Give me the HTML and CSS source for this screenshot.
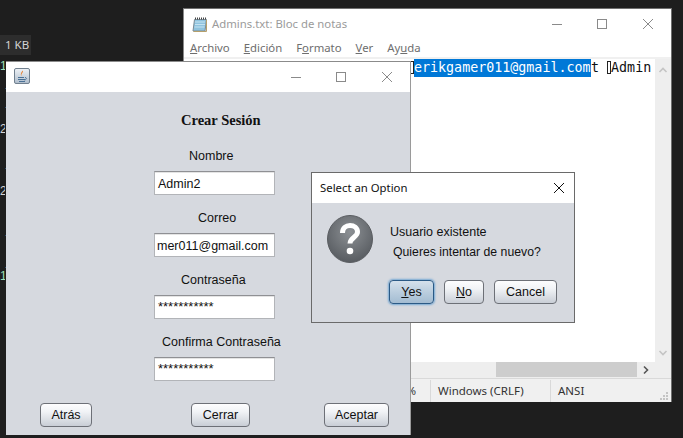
FILE: index.html
```html
<!DOCTYPE html>
<html lang="es">
<head>
<meta charset="utf-8">
<title>Crear Sesión</title>
<link rel="stylesheet" href="styles.css">
</head>
<body>
<div class="desktop">
  <div class="explorer-size">1 KB</div>
  <div class="gutter g1">1</div>
  <div class="gutter g2">2</div>
  <div class="gutter g3">2</div>
  <div class="gutter g4">1</div>
  <div class="ticks"></div>

  <section class="window notepad">
    <header class="np-title">
      <svg class="np-icon" width="16" height="16" viewBox="0 0 16 16">
        <path d="M2.5 3.5h12l-1.5 11.5h-12z" fill="#8fc3de" stroke="#7b8a94"/>
        <path d="M3 6h10M3 8.5h10M2.5 11h10" stroke="#c4e2f0" stroke-width="1"/>
        <path d="M3 2.5h11" stroke="#444" stroke-width="2" stroke-dasharray="1 1"/>
        <path d="M14.5 4v11.5h-13" fill="none" stroke="#b59f6b"/>
      </svg>
      <span class="np-name">Admins.txt: Bloc de notas</span>
      <div class="controls np-controls">
        <svg width="10" height="10" viewBox="0 0 10 10"><path d="M0 5.500h10" stroke="#8a8a8a"/></svg>
        <svg width="10" height="10" viewBox="0 0 10 10"><rect x=".5" y=".5" width="9" height="9" fill="none" stroke="#8a8a8a"/></svg>
        <svg width="10" height="10" viewBox="0 0 10 10"><path d="M0 0l10 10M10 0L0 10" stroke="#8a8a8a"/></svg>
      </div>
    </header>
    <nav class="np-menu">
      <span><u>A</u>rchivo</span>
      <span><u>E</u>dición</span>
      <span>F<u>o</u>rmato</span>
      <span><u>V</u>er</span>
      <span>Ay<u>u</u>da</span>
    </nav>
    <div class="np-body">
      <div class="np-edit">
        <div class="np-line"><span class="box"></span><span class="sel">erikgamer011@gmail.com</span>t <span class="box"></span>Admin</div>
      </div>
      <div class="vscroll">
        <svg width="10" height="6" viewBox="0 0 10 6"><path d="M1.5 5L5 1.5 8.5 5" fill="none" stroke="#c4c4c4" stroke-width="1.6"/></svg>
        <svg width="10" height="6" viewBox="0 0 10 6"><path d="M1.5 1L5 4.5 8.5 1" fill="none" stroke="#c4c4c4" stroke-width="1.6"/></svg>
      </div>
    </div>
    <div class="hscroll">
      <div class="hthumb"></div>
      <svg class="harrow" width="6" height="10" viewBox="0 0 6 10"><path d="M1 1.5L4.5 5 1 8.5" fill="none" stroke="#555" stroke-width="1.6"/></svg>
    </div>
    <footer class="np-status">
      <span class="st-zoom">%</span>
      <span class="st-eol">Windows (CRLF)</span>
      <span class="st-enc">ANSI</span>
      <svg class="grip" width="10" height="10" viewBox="0 0 10 10"><path d="M7 1h2v2H7zM4 4h2v2H4zM7 4h2v2H7zM1 7h2v2H1zM4 7h2v2H4zM7 7h2v2H7z" fill="#c4c4c4"/></svg>
    </footer>
  </section>

  <section class="window java">
    <header class="j-title">
      <svg class="j-icon" width="16" height="16" viewBox="0 0 16 16">
        <defs><linearGradient id="jg" x1="0" y1="0" x2="0" y2="1"><stop offset="0" stop-color="#eef2f6"/><stop offset="1" stop-color="#aebccb"/></linearGradient></defs>
        <rect x=".5" y=".5" width="15" height="15" rx="1.5" fill="url(#jg)" stroke="#71808f"/>
        <path d="M8.500 2.500C10 4.500 6.500 5.500 7.500 8 6 6.500 7.500 4.500 8.500 2.500z" fill="#e8751a"/>
        <path d="M4 9.500h6M4 11.500h7M5 13.500h6" stroke="#4a7196"/>
        <path d="M11 9.500c2 0 2 2-.5 2.500" fill="none" stroke="#4a7196"/>
      </svg>
      <div class="controls j-controls">
        <svg width="10" height="10" viewBox="0 0 10 10"><path d="M0 5.500h10" stroke="#8a8a8a"/></svg>
        <svg width="10" height="10" viewBox="0 0 10 10"><rect x=".5" y=".5" width="9" height="9" fill="none" stroke="#8a8a8a"/></svg>
        <svg width="10" height="10" viewBox="0 0 10 10"><path d="M0 0l10 10M10 0L0 10" stroke="#8a8a8a"/></svg>
      </div>
    </header>
    <main class="j-body">
      <h1 class="j-heading">Crear Sesión</h1>
      <div class="group">
        <label class="lbl lbl-nombre">Nombre</label>
        <div class="field">Admin2</div>
      </div>
      <div class="group">
        <label class="lbl lbl-correo">Correo</label>
        <div class="field field-scrolled">mer011@gmail.com</div>
      </div>
      <div class="group">
        <label class="lbl lbl-pass">Contraseña</label>
        <div class="field field-pass">***********</div>
      </div>
      <div class="group">
        <label class="lbl lbl-confirm">Confirma Contraseña</label>
        <div class="field field-pass">***********</div>
      </div>
      <div class="j-actions">
        <button class="btn btn-back">Atrás</button>
        <button class="btn btn-close">Cerrar</button>
        <button class="btn btn-accept">Aceptar</button>
      </div>
    </main>
  </section>

  <section class="window dialog">
    <header class="d-title">
      <span>Select an Option</span>
      <svg width="10" height="10" viewBox="0 0 10 10"><path d="M0 0l10 10M10 0L0 10" stroke="#111"/></svg>
    </header>
    <div class="d-body">
      <div class="d-message">
        <svg class="q-icon" width="46" height="48" viewBox="0 0 46 48">
          <defs><radialGradient id="qg" cx=".5" cy=".35" r=".7"><stop offset="0" stop-color="#8c9094"/><stop offset="1" stop-color="#54585d"/></radialGradient></defs>
          <ellipse cx="23" cy="24" rx="22.500" ry="23.500" fill="url(#qg)" stroke="#5a5d61"/>
          <path d="M15.500 18c0-5 3.500-7.500 7.500-7.500s7.500 2.500 7.500 6.500c0 5-7.500 5.500-7.500 11.500" fill="none" stroke="#fff" stroke-width="5"/>
          <circle cx="23" cy="36" r="3.300" fill="#fff"/>
        </svg>
        <div class="d-text">
          <p>Usuario existente</p>
          <p class="d-q">Quieres intentar de nuevo?</p>
        </div>
      </div>
      <div class="d-actions">
        <button class="btn btn-yes"><u>Y</u>es</button>
        <button class="btn btn-no"><u>N</u>o</button>
        <button class="btn btn-cancel">Cancel</button>
      </div>
    </div>
  </section>
</div>
</body>
</html>
```

FILE: styles.css
```css
* { box-sizing: border-box; }
html, body { margin: 0; height: 100%; }
body { background: #1e1e1e; overflow: hidden; }
.desktop { position: relative; width: 683px; height: 438px; overflow: hidden; background: #1e1e1e; }

.explorer-size { position: absolute; left: 0; top: 35px; width: 31px; height: 20px; padding-left: 5px; background: #2d2d2d; color: #d4d4d4; white-space: nowrap; font: 11.5px/20px "Noto Sans", "Liberation Sans", sans-serif; }
.gutter { position: absolute; left: 0; width: 5px; overflow: hidden; color: #d4d4d4; font: 12px/16px "Liberation Sans", sans-serif; }
.g1 { top: 58px; color: #9fe0b8; }
.g2 { top: 121px; }
.g3 { top: 183px; }
.g4 { top: 268px; color: #9fe0b8; }
.ticks { position: absolute; left: 5px; top: 88px; width: 1px; height: 1px; background: #2f4f6f; box-shadow: 0 19px #2f4f6f, 0 80px #2f4f6f, 0 147px #2f4f6f, 0 179px #2f4f6f; }

.window { position: absolute; display: flex; flex-direction: column; }
.controls { display: flex; margin-left: auto; gap: 35px; }
.controls svg { display: block; }
.controls svg:last-child { margin-left: 1px; }

/* Notepad */
.notepad { left: 183px; top: 8px; width: 489px; height: 394px; background: #fff; border: 1px solid #6f6f6f; border-bottom: 0; border-left-color: #8a8a8a; }
.np-title { display: flex; align-items: center; height: 29px; flex: none; padding-left: 8px; padding-right: 18px; }
.np-icon { flex: none; }
.np-name { margin-left: 4px; color: #9b9b9b; font: 11.35px/16px "Noto Sans", sans-serif; }
.np-menu { display: flex; height: 19px; flex: none; gap: 14px; padding-left: 6px; color: #6e6e6e; font: 11.35px/19px "Noto Sans", sans-serif; }
.np-body { flex: 1; display: flex; min-height: 0; border-top: 2px solid #f0f0f0; }
.np-edit { flex: 1; background: #fff; overflow: hidden; }
.np-line { height: 18px; padding-left: 226px; white-space: pre; color: #111; font: 13.33px/18px "DejaVu Sans Mono", monospace; }
.box { display: inline-block; width: 4px; height: 13px; margin-top: 2px; border: 1px solid #222; vertical-align: top; }
.sel { display: inline-block; width: 177px; height: 18px; background: #0078d7; color: #fff; }
.vscroll { flex: none; width: 16px; background: #eee; display: flex; flex-direction: column; justify-content: space-between; align-items: center; padding: 8px 0 6px; }
.hscroll { flex: none; display: flex; align-items: center; height: 16px; padding-left: 312px; background: #eee; }
.hthumb { width: 141px; height: 15px; align-self: flex-start; background: #cdcdcd; }
.harrow { margin-left: 6px; }
.np-status { flex: none; position: relative; display: flex; align-items: center; height: 24px; background: #f0f0f0; border-top: 1px solid #d9d9d9; color: #333; font: 11.5px/16px "Noto Sans", sans-serif; }
.np-status span { height: 22px; line-height: 22px; }
.st-zoom { width: 247px; text-align: right; border-right: 1px solid #d9d9d9; padding-right: 14px; }
.st-eol { width: 120px; padding-left: 7px; border-right: 1px solid #d9d9d9; }
.st-enc { padding-left: 7px; }
.grip { margin-left: auto; margin-right: 2px; align-self: flex-end; margin-bottom: 1px; }

/* Java window */
.java { left: 6px; top: 61px; width: 405px; height: 374px; background: #d6d9df; border-top: 1px solid #8b8b8b; border-right: 1px solid #9a9a9a; }
.j-title { display: flex; align-items: center; height: 30px; flex: none; padding-left: 8px; padding-right: 18px; background: #fff; }
.j-icon { margin-bottom: 2px; }
.j-body { flex: 1; padding: 18px 0 0 148px; color: #111; }
.j-heading { margin: 0 0 18px 27px; height: 20px; font: bold 14.5px/20px "Liberation Serif", serif; }
.group { margin-bottom: 15px; }
.lbl { display: block; height: 16px; margin-bottom: 7px; font: 12.5px/16px "Liberation Sans", sans-serif; }
.lbl-nombre { margin-left: 35px; }
.lbl-correo { margin-left: 44px; }
.lbl-pass { margin-left: 27px; }
.lbl-confirm { margin-left: 8px; }
.field { width: 121px; height: 24px; padding-left: 3px; background: #fff; border: 1px solid #b2b4b8; border-top-color: #8f9094; box-shadow: inset 0 1px 0 #e4e4e4; overflow: hidden; white-space: nowrap; font: 12.5px/24px "Liberation Sans", sans-serif; color: #111; }
.field-scrolled { padding-left: 2px; }
.field-pass { font-size: 13px; line-height: 22px; }
.j-actions { display: flex; margin: 22px 0 0 -114px; }
.btn { height: 24px; padding: 0; border: 1px solid #6d7077; border-radius: 4px; background: linear-gradient(#fdfdfe, #f1f3f6 35%, #c9ced6); color: #111; font: 12.5px/20px "Liberation Sans", sans-serif; }
.btn-back { width: 52px; }
.btn-close { width: 59px; margin-left: 99px; }
.btn-accept { width: 65px; margin-left: 74px; }

/* Dialog */
.dialog { left: 311px; top: 172px; width: 264px; height: 151px; background: #d6d9df; border: 1px solid #6a6a6a; }
.d-title { display: flex; align-items: center; justify-content: space-between; height: 30px; flex: none; padding: 0 10px 0 8px; background: #fff; color: #111; font: 11.35px/16px "Noto Sans", sans-serif; }
.d-body { flex: 1; padding: 12px 17px 0 15px; }
.d-message { display: flex; height: 65px; }
.q-icon { flex: none; }
.d-text { margin-left: 17px; padding-top: 8px; color: #111; font: 12.5px/19.5px "Liberation Sans", sans-serif; }
.d-text p { margin: 0; }
.d-q { padding-left: 3px; font-size: 12.25px; }
.d-actions { display: flex; gap: 10px; margin-left: 62px; }
.btn-yes { width: 45px; border-color: #2b5a86; background: linear-gradient(#d5e1ec, #c2d3e2 35%, #a3bcd2); box-shadow: 0 0 2px 1px #76a8d3; }
.btn-no { width: 40px; }
.btn-cancel { width: 63px; }
```
